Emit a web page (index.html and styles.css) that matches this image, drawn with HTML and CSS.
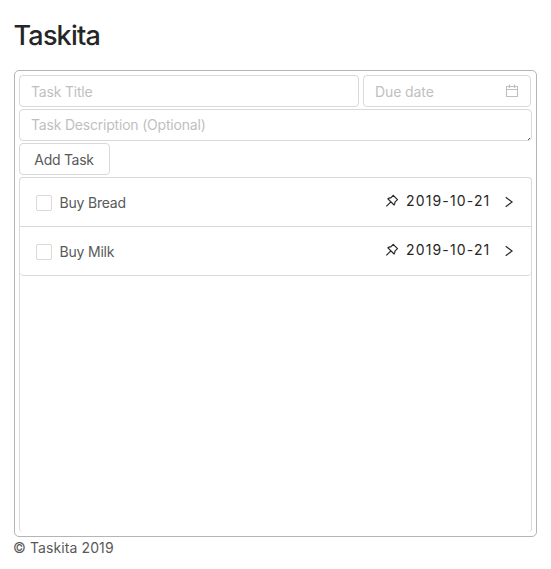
FILE: index.html
```html
<!DOCTYPE html>
<html lang="en">
<head>
<meta charset="utf-8">
<title>Taskita</title>
<link rel="stylesheet" href="styles.css">
</head>
<body>
<svg width="0" height="0" class="symbols">
  <symbol id="pin" viewBox="0 0 14 14"><path d="M8.2 1.3 12.5 5.6 9.9 8.1Q10.1 9.7 9.1 11L2.9 4.8Q4.2 3.7 5.8 3.9ZM5.9 7.9 1.3 12.4" fill="none" stroke="currentColor" stroke-width="1.2" stroke-linejoin="round"/></symbol>
  <symbol id="right" viewBox="0 0 12 12"><path d="M2.7 1.2 9.1 6 2.7 10.8" fill="none" stroke="currentColor" stroke-width="1.15"/></symbol>
</svg>
<h1>Taskita</h1>
<main class="panel">
  <form class="form">
    <div class="row">
      <div class="field title"><span>Task Title</span></div>
      <div class="field due"><span>Due date</span>
        <svg class="calendar" viewBox="0 0 14 14"><path d="M1.5 2.5H12.5V12.5H1.5ZM1.5 5.5H12.5M4.5 .5V4M9.5 .5V4" fill="none" stroke="currentColor" stroke-width="1.1"/></svg>
      </div>
    </div>
    <div class="field description"><span>Task Description (Optional)</span>
      <svg class="grip" viewBox="0 0 4 4"><path d="M1 3H2V4H1ZM2 2H3V3H2Z" fill="#555"/></svg>
    </div>
    <button type="button" class="add"><span>Add Task</span></button>
  </form>
  <section class="tasks">
    <div class="task">
      <i class="check"></i><span class="name">Buy Bread</span>
      <div class="extra"><svg class="pin"><use href="#pin"/></svg><span class="date">2019-10-21</span><svg class="right"><use href="#right"/></svg></div>
    </div>
    <div class="task">
      <i class="check"></i><span class="name">Buy Milk</span>
      <div class="extra"><svg class="pin"><use href="#pin"/></svg><span class="date">2019-10-21</span><svg class="right"><use href="#right"/></svg></div>
    </div>
  </section>
</main>
<footer><span>© Taskita 2019</span></footer>
</body>
</html>
```

FILE: styles.css
```css
* { box-sizing: border-box; }
body { margin: 0; padding: 14px; background: #fff; color: #595959; font: 14px/21px Inter, "Liberation Sans", sans-serif; letter-spacing: -0.2px; }
.symbols { position: absolute; }
h1 { margin: 0 0 13px; padding-top: 1px; height: 43px; font-size: 27px; line-height: 42px; font-weight: 500; color: #262626; letter-spacing: -0.8px; text-indent: -0.5px; }
.panel { display: flex; flex-direction: column; width: 523px; height: 467px; padding: 4px; border: 1px solid #b5b5b5; border-radius: 5px; }
.form { display: flex; flex-direction: column; gap: 2px; margin-bottom: 2px; }
.row { display: flex; gap: 4px; }
.field { display: flex; align-items: center; height: 32px; padding: 0 11px; border: 1px solid #d9d9d9; border-radius: 4px; color: #bfbfbf; }
.title { width: 340px; }
.due { width: 168px; justify-content: space-between; letter-spacing: -0.1px; }
.description { position: relative; padding-bottom: 2px; }
.calendar { width: 14px; height: 14px; }
.grip { position: absolute; right: 0; bottom: 0; width: 4px; height: 4px; }
.add { width: 91px; height: 32px; padding: 0 1px 0 0; border: 1px solid #d9d9d9; border-radius: 4px; background: #fff; color: #595959; font: inherit; letter-spacing: -0.3px; }
.tasks { flex: 1; border: 1px solid #d9d9d9; border-bottom: 0; border-radius: 4px; }
.task { display: flex; align-items: center; height: 49px; padding: 2px 16px 0; border-bottom: 1px solid #d9d9d9; }
.task:last-child { border-radius: 0 0 4px 4px; }
.check { width: 16px; height: 16px; margin-right: 8px; border: 1px solid #d9d9d9; border-radius: 2px; }
.name { margin: -2px 0 0 -0.5px; }
.extra { display: flex; align-items: center; margin: -5px 0 0 auto; color: #262626; }
.pin { width: 14px; height: 14px; margin: 1px 7px 0 0; }
.date { width: 84px; letter-spacing: 1.15px; white-space: nowrap; }
.right { width: 12px; height: 12px; margin: 3px 0 0 13px; }
footer { line-height: 22px; letter-spacing: 0.1px; text-indent: -1px; }
```
